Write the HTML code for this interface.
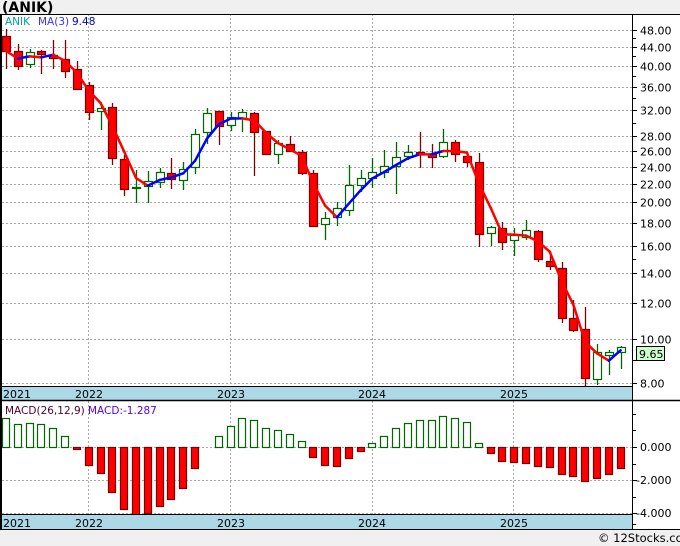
<!DOCTYPE html>
<html><head><meta charset="utf-8"><style>
html,body{margin:0;padding:0;background:#f0f0f0;width:680px;height:546px;overflow:hidden;}
svg{display:block;}
svg text{font-family:"DejaVu Sans","Liberation Sans",sans-serif;}
</style></head><body>
<svg id="s" width="680" height="546" xmlns="http://www.w3.org/2000/svg">
<rect x="0" y="0" width="680" height="546" fill="#f0f0f0"/>
<rect x="0" y="14" width="680" height="516" fill="#ffffff"/>
<text x="2" y="12" font-size="14" font-weight="bold" fill="#000">(ANIK)</text>
<g id="g"></g>
<text x="5" y="25" font-size="10.5" fill="#00a0a0">ANIK</text>
<text x="38" y="25" font-size="10.5" fill="#3333ff">MA(3)</text>
<text x="72" y="25" font-size="10.5" fill="#0000cc">9.48</text>
<text x="5" y="414" font-size="10.5" fill="#500030">MACD(26,12,9)</text>
<text x="88" y="414" font-size="10.5" fill="#5500ff">MACD:-1.287</text>
<text x="598" y="542" font-size="11.5" fill="#000">© 12Stocks.com</text>
</svg>
<script>
var g=document.getElementById('g');var h='';
function Y(p){return 30+(Math.log(48)-Math.log(p))*197;}
var pl=[48,44,40,36,32,28,26,24,22,20,18,16,14,12,10,8];
pl.forEach(function(p){var y=Math.round(Y(p))+0.5;h+='<line x1="2" x2="632" y1="'+y+'" y2="'+y+'" stroke="#aaa" stroke-dasharray="2,2"/>';
h+='<line x1="632" x2="637" y1="'+y+'" y2="'+y+'" stroke="#000"/>';
h+='<text x="640" y="'+(y+4)+'" font-size="11" fill="#000">'+p.toFixed(2)+'</text>';});
[46,42,38,34,30,9,15].forEach(function(p){var y=Math.round(Y(p))+0.5;h+='<line x1="632" x2="636" y1="'+y+'" y2="'+y+'" stroke="#000"/>';});
[88,230,372,513].forEach(function(x){h+='<line x1="'+(x+.5)+'" x2="'+(x+.5)+'" y1="14" y2="387" stroke="#aaa" stroke-dasharray="2,2"/>';
h+='<line x1="'+(x+.5)+'" x2="'+(x+.5)+'" y1="401" y2="515" stroke="#aaa" stroke-dasharray="2,2"/>';});
[447,480,513].forEach(function(y){h+='<line x1="2" x2="632" y1="'+(y+.5)+'" y2="'+(y+.5)+'" stroke="#aaa" stroke-dasharray="2,2"/>';});
[[0,'0.000',447],[-2,'-2.000',480],[-4,'-4.000',513]].forEach(function(a){h+='<line x1="632" x2="637" y1="'+(a[2]+.5)+'" y2="'+(a[2]+.5)+'" stroke="#000"/><text x="'+(a[0]<0?636:640)+'" y="'+(a[2]+4)+'" font-size="11" fill="#000">'+a[1]+'</text>';});
[414,430,464,497,524].forEach(function(y){h+='<line x1="632" x2="636" y1="'+(y+.5)+'" y2="'+(y+.5)+'" stroke="#000"/>';});
var C=[['r',36,51,29,69],['r',51,66,44,70],['g',52,64,49,68],['r',51,54,50,74],['r',55,58,40,69],['r',59,71,40,78],['r',69,89,61,90],['r',85,112,82,120],
['g',108,111,104,130],['r',107,158,103,165],['r',159,189,155,196],['g',187,188,170,203],['g',181,186,171,203],['g',172,182,168,188],['r',173,179,158,189],['g',169,180,162,190],
['g',134,167,129,174],['g',113,132,108,144],['r',111,126,111,145],['g',117,125,112,131],['g',112,118,109,132],['r',113,132,112,176],['r',131,154,131,154],['g',143,154,140,164],
['r',144,151,136,151],['r',152,173,150,175],['r',173,226,170,227],['g',218,224,212,240],['g',208,217,202,226],['g',185,210,165,216],['g',178,185,170,192],['g',172,178,158,188],
['g',166,172,150,178],['g',157,166,142,194],['g',152,156,145,160],['r',152,154,132,168],['r',154,157,144,168],['g',142,156,129,158],['r',142,154,140,162],['r',156,162,156,167],
['r',162,234,153,247],['g',227,233,226,246],['r',228,242,222,250],['g',235,240,228,256],['g',230,237,220,240],['r',231,259,230,262],['r',261,266,251,270],['r',268,318,262,323],
['r',318,330,300,332],['r',329,378,307,386],['g',352,379,344,385],['g',352,355,350,375],['g',347,352,346,369]];
function X(i){return 6+11.82*i;}
var cl=[];
C.forEach(function(c,i){var x=Math.round(X(i));var col=c[0]=='r'?'#800000':'#006600';
h+='<line x1="'+(x+.5)+'" x2="'+(x+.5)+'" y1="'+c[3]+'" y2="'+c[4]+'" stroke="'+col+'" stroke-width="1.3"/>';
var bh=Math.max(1,c[2]-c[1]);
h+='<rect x="'+(x-3.5)+'" y="'+(c[1]+.5)+'" width="8" height="'+bh+'" fill="'+(c[0]=='r'?'#ff0000':'#ffffff')+'" stroke="'+col+'" stroke-width="1.2"/>';
cl.push(c[0]=='r'?c[2]:c[1]);});
var ma=[];for(var i=0;i<cl.length;i++){var a=Math.max(0,i-2),s=0,n=0;for(var j=a;j<=i;j++){s+=cl[j];n++;}ma.push(s/n);}
for(var i=1;i<ma.length;i++){var col=ma[i]<ma[i-1]?'#0000ff':'#ff0000';
h+='<line x1="'+X(i-1)+'" y1="'+ma[i-1]+'" x2="'+X(i)+'" y2="'+ma[i]+'" stroke="'+col+'" stroke-width="2.5" stroke-linecap="round"/>';}
var M=[418,424,423,424,428,436,449,465,473,492,509,515,513,506,499,488,468,447,436,426,418,420,428,430,434,441,457,465,466,458,451,443,436,428,423,420,420,416,418,422,443,453,461,462,463,466,467,474,476,481,478,474,468];
M.forEach(function(v,i){var x=Math.round(X(i));if(v==447)return;
if(v<447)h+='<rect x="'+(x-3.5)+'" y="'+(v+.5)+'" width="7" height="'+(447-v)+'" fill="#fff" stroke="#006600" stroke-width="1.2"/>';
else h+='<rect x="'+(x-3.5)+'" y="447.5" width="7" height="'+(v-447)+'" fill="#ff0000" stroke="#800000" stroke-width="1.2"/>';});
h+='<rect x="0" y="387" width="632" height="14" fill="#add8e6"/>';
h+='<rect x="0" y="515" width="632" height="14" fill="#add8e6"/>';
[['2021',3],['2022',75],['2023',217],['2024',358],['2025',500]].forEach(function(a){
h+='<text x="'+a[1]+'" y="398" font-size="11" fill="#000">'+a[0]+'</text><text x="'+a[1]+'" y="527" font-size="11" fill="#000">'+a[0]+'</text>';});
h+='<line x1="0" x2="680" y1="14.5" y2="14.5" stroke="#000"/>';
h+='<line x1="0" x2="680" y1="400.5" y2="400.5" stroke="#000" stroke-width="1.5"/>';
h+='<line x1="0" x2="632" y1="386.5" y2="386.5" stroke="#000"/>';
h+='<line x1="0" x2="632" y1="514.5" y2="514.5" stroke="#000"/>';
h+='<line x1="0" x2="680" y1="529.5" y2="529.5" stroke="#000"/>';
h+='<line x1="1" x2="1" y1="14" y2="530" stroke="#000" stroke-width="2"/>';
h+='<line x1="632.5" x2="632.5" y1="14" y2="530" stroke="#000"/>';
h+='<rect x="636.5" y="346.5" width="28" height="14" fill="#ccffcc" stroke="#000"/><text x="639" y="358" font-size="11" fill="#000">9.65</text>';
g.innerHTML=h;
</script>
</body></html>
